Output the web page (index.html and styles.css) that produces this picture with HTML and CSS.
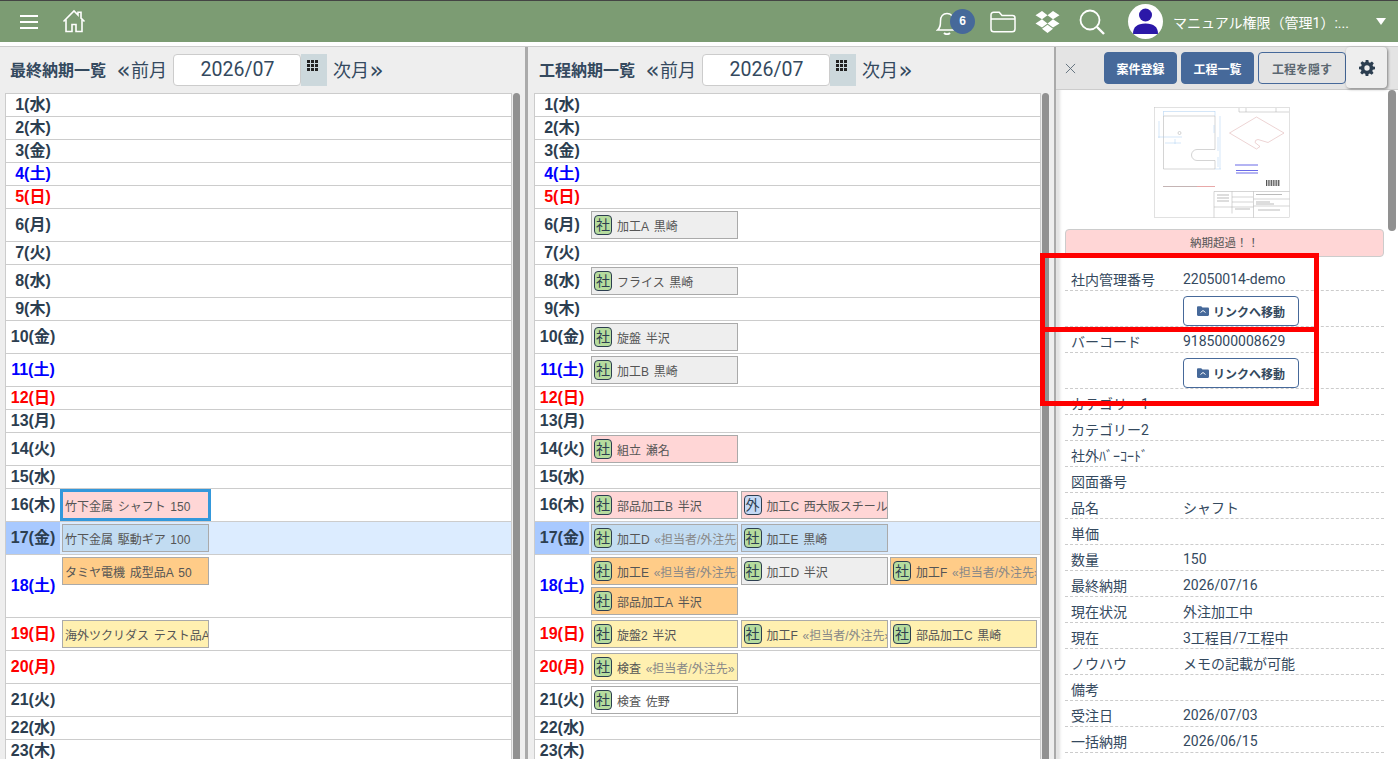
FILE: index.html
```html
<!DOCTYPE html>
<html lang="ja">
<head>
    <meta charset="UTF-8">
    <title>納期一覧</title>
    <link rel="stylesheet" href="styles.css">
</head>
<body>
    <header class="navbar">
        <div class="menu-icon"><span></span><span></span><span></span></div>
        <svg class="home-icon" viewBox="0 0 24 24" width="24" height="24" fill="none" stroke="#fff" stroke-width="1.6">
            <path d="M1.5 12.5 12 2l4 4V3.2h3v6l3.5 3.3"/>
            <path d="M4 10.5V22.5h6v-7h4v7h6V10.5"/>
        </svg>
        <div class="spacer"></div>
        <div class="bell">
            <svg viewBox="0 0 22 26" width="22" height="26" fill="none" stroke="#fff" stroke-width="1.5">
                <path d="M1.5 21c3-2.500 3-5 3-9 0-4.500 2.500-7.500 6.500-7.500s6.500 3 6.500 7.500c0 4 0 6.500 3 9z"/>
                <path d="M8 24c1.500 1.500 4.500 1.500 6 0" stroke-width="2"/>
            </svg>
            <span class="bell-count">6</span>
        </div>
        <svg class="nav-icon folder-icon" viewBox="0 0 26 22" width="26" height="22" fill="none" stroke="#fff" stroke-width="1.5">
            <path d="M1 18V4c0-1.700 1-2.800 2.700-2.800h5.500L12 4.500h10.500c1.500 0 2.500 1 2.500 2.500v11c0 1.700-1 2.800-2.800 2.800H3.800C2 20.800 1 19.700 1 18z"/>
            <path d="M1 8h24"/>
        </svg>
        <svg class="nav-icon drop-icon" viewBox="0 0 24 22" width="25" height="22" fill="#fff">
            <path d="M6.500 0 0 4.200l6.500 4.100L12 4.200zM17.500 0 12 4.200l5.500 4.100L24 4.200zM0 12.400l6.500 4.100 5.500-4.100-5.500-4.100zM17.500 8.300 12 12.400l5.500 4.100 6.500-4.100zM6.500 17.800l5.500 4.200 5.500-4.200-5.500-4.100z"/>
        </svg>
        <svg class="nav-icon search-icon" viewBox="0 0 26 26" width="26" height="26" fill="none" stroke="#fff" stroke-width="1.800">
            <circle cx="11" cy="11" r="9.500"/>
            <path d="M18 18l7 7" stroke-width="2.400"/>
        </svg>
        <div class="avatar">
            <svg viewBox="0 0 35 35" width="35" height="35" fill="#2b18a8">
                <circle cx="17.500" cy="11" r="6.500"/>
                <path d="M5 30c0-7 4-10.500 12.500-10.500S30 23 30 30z"/>
            </svg>
        </div>
        <div class="user-name">マニュアル権限（管理1）:...</div>
        <div class="user-arrow"></div>
    </header>

    <main class="layout">
        <section class="panel">
            <div class="panel-head">
                <span class="panel-title">最終納期一覧</span>
                <a class="month-link"><span class="guillemet">«</span>前月</a>
                <div class="month-input">2026/07</div>
                <div class="month-btn"><div class="grid-icon"><i></i><i></i><i></i><i></i><i></i><i></i><i></i><i></i><i></i></div></div>
                <a class="month-link">次月<span class="guillemet">»</span></a>
            </div>
            <div class="panel-body">
                <div class="cal-list">
                    <div class="row"><div class="day">1(水)</div></div>
                    <div class="row"><div class="day">2(木)</div></div>
                    <div class="row"><div class="day">3(金)</div></div>
                    <div class="row"><div class="day sat">4(土)</div></div>
                    <div class="row"><div class="day sun">5(日)</div></div>
                    <div class="row tall"><div class="day">6(月)</div></div>
                    <div class="row"><div class="day">7(火)</div></div>
                    <div class="row tall"><div class="day">8(水)</div></div>
                    <div class="row"><div class="day">9(木)</div></div>
                    <div class="row tall"><div class="day">10(金)</div></div>
                    <div class="row tall"><div class="day sat">11(土)</div></div>
                    <div class="row"><div class="day sun">12(日)</div></div>
                    <div class="row"><div class="day">13(月)</div></div>
                    <div class="row tall"><div class="day">14(火)</div></div>
                    <div class="row"><div class="day">15(水)</div></div>
                    <div class="row tall"><div class="day">16(木)</div><div class="chips"><div class="chip pink selected">竹下金属&nbsp; シャフト&nbsp; 150</div></div></div>
                    <div class="row tall today"><div class="day">17(金)</div><div class="chips"><div class="chip blue">竹下金属&nbsp; 駆動ギア&nbsp; 100</div></div></div>
                    <div class="row double"><div class="day sat">18(土)</div><div class="chips"><div class="chip orange">タミヤ電機&nbsp; 成型品A&nbsp; 50</div></div></div>
                    <div class="row tall"><div class="day sun">19(日)</div><div class="chips"><div class="chip yellow">海外ツクリダス&nbsp; テスト品A</div></div></div>
                    <div class="row tall"><div class="day sun">20(月)</div></div>
                    <div class="row tall"><div class="day">21(火)</div></div>
                    <div class="row"><div class="day">22(水)</div></div>
                    <div class="row"><div class="day">23(木)</div></div>
                </div>
                <div class="scroll-thumb"></div>
            </div>
        </section>

        <section class="panel">
            <div class="panel-head">
                <span class="panel-title">工程納期一覧</span>
                <a class="month-link"><span class="guillemet">«</span>前月</a>
                <div class="month-input">2026/07</div>
                <div class="month-btn"><div class="grid-icon"><i></i><i></i><i></i><i></i><i></i><i></i><i></i><i></i><i></i></div></div>
                <a class="month-link">次月<span class="guillemet">»</span></a>
            </div>
            <div class="panel-body">
                <div class="cal-list">
                    <div class="row"><div class="day">1(水)</div></div>
                    <div class="row"><div class="day">2(木)</div></div>
                    <div class="row"><div class="day">3(金)</div></div>
                    <div class="row"><div class="day sat">4(土)</div></div>
                    <div class="row"><div class="day sun">5(日)</div></div>
                    <div class="row tall"><div class="day">6(月)</div><div class="chips"><div class="chip grey"><b class="tag">社</b>加工A&nbsp; 黒崎</div></div></div>
                    <div class="row"><div class="day">7(火)</div></div>
                    <div class="row tall"><div class="day">8(水)</div><div class="chips"><div class="chip grey"><b class="tag">社</b>フライス&nbsp; 黒崎</div></div></div>
                    <div class="row"><div class="day">9(木)</div></div>
                    <div class="row tall"><div class="day">10(金)</div><div class="chips"><div class="chip grey"><b class="tag">社</b>旋盤&nbsp; 半沢</div></div></div>
                    <div class="row tall"><div class="day sat">11(土)</div><div class="chips"><div class="chip grey"><b class="tag">社</b>加工B&nbsp; 黒崎</div></div></div>
                    <div class="row"><div class="day sun">12(日)</div></div>
                    <div class="row"><div class="day">13(月)</div></div>
                    <div class="row tall"><div class="day">14(火)</div><div class="chips"><div class="chip pink"><b class="tag">社</b>組立&nbsp; 瀬名</div></div></div>
                    <div class="row"><div class="day">15(水)</div></div>
                    <div class="row tall"><div class="day">16(木)</div><div class="chips">
                        <div class="chip pink"><b class="tag">社</b>部品加工B&nbsp; 半沢</div>
                        <div class="chip pink"><b class="tag outer">外</b>加工C&nbsp; 西大阪スチール</div>
                    </div></div>
                    <div class="row tall today"><div class="day">17(金)</div><div class="chips">
                        <div class="chip blue"><b class="tag">社</b>加工D&nbsp; <span class="muted">«担当者/外注先»</span></div>
                        <div class="chip blue"><b class="tag">社</b>加工E&nbsp; 黒崎</div>
                    </div></div>
                    <div class="row double"><div class="day sat">18(土)</div><div class="chips">
                        <div class="chip orange"><b class="tag">社</b>加工E&nbsp; <span class="muted">«担当者/外注先»</span></div>
                        <div class="chip grey"><b class="tag">社</b>加工D&nbsp; 半沢</div>
                        <div class="chip orange"><b class="tag">社</b>加工F&nbsp; <span class="muted">«担当者/外注先»</span></div>
                        <div class="chip orange"><b class="tag">社</b>部品加工A&nbsp; 半沢</div>
                    </div></div>
                    <div class="row tall"><div class="day sun">19(日)</div><div class="chips">
                        <div class="chip yellow"><b class="tag">社</b>旋盤2&nbsp; 半沢</div>
                        <div class="chip yellow"><b class="tag">社</b>加工F&nbsp; <span class="muted">«担当者/外注先»</span></div>
                        <div class="chip yellow"><b class="tag">社</b>部品加工C&nbsp; 黒崎</div>
                    </div></div>
                    <div class="row tall"><div class="day sun">20(月)</div><div class="chips"><div class="chip yellow"><b class="tag">社</b>検査&nbsp; <span class="muted">«担当者/外注先»</span></div></div></div>
                    <div class="row tall"><div class="day">21(火)</div><div class="chips"><div class="chip white"><b class="tag">社</b>検査&nbsp; 佐野</div></div></div>
                    <div class="row"><div class="day">22(水)</div></div>
                    <div class="row"><div class="day">23(木)</div></div>
                </div>
                <div class="scroll-thumb"></div>
            </div>
        </section>

        <aside class="detail">
            <div class="detail-head">
                <svg class="close-icon" viewBox="0 0 12 12" width="11" height="11" stroke="#5b6b78" fill="none"><path d="M1 1l10 10M11 1L1 11"/></svg>
                <button class="btn">案件登録</button>
                <button class="btn">工程一覧</button>
                <button class="btn btn-line">工程を隠す</button>
                <div class="gear-card">
                    <svg viewBox="0 0 24 24" width="16" height="16" fill="#2c3e50">
                        <path fill-rule="evenodd" d="M10 0h4l.7 3.300 1.900.8L19.400 2.200l2.800 2.800-1.900 2.800.8 1.900L24 10v4l-3.300.7-.8 1.900 1.900 2.800-2.800 2.800-2.800-1.900-1.900.8L14 24h-4l-.7-3.300-1.900-.8-2.800 1.900-2.800-2.800 1.900-2.800-.8-1.900L0 14v-4l3.300-.7.8-1.900L2.200 4.600 5 1.800l2.800 1.900 1.900-.8zM12 8a4 4 0 1 0 0 8 4 4 0 0 0 0-8z"/>
                    </svg>
                </div>
            </div>
            <div class="detail-scroll">
                <div class="detail-body">
                    <svg class="drawing" viewBox="0 0 136 111" width="136" height="111" fill="none" stroke-width=".5">
                        <rect x=".5" y=".5" width="135" height="110" stroke="#c4c4c4"/>
                        <path d="M9.500 9h51.500v33.500H43a5.500 5.500 0 0 0 0 11h18V62H9.500z" stroke="#a8a8a8"/>
                        <path d="M9.500 4.500H61M9.500 9V4M61 9V4M66 9v53M61 62h6M5 14v17M4 30h24M21 32v5M11 36h16M60 18v8M64 30v14M64 50v10" stroke="#a9cdf0"/>
                        <circle cx="25.500" cy="26" r="1.500" stroke="#aaa"/>
                        <path d="M75.500 26 102.500 10 130 26l-16 9.500-10-3a3 3 0 0 0-3 3l5 4-3.500 2.500z" stroke="#dba9a9"/>
                        <path d="M81 58h23M82 63.500h22M82 66h22" stroke="#6a6ae8" stroke-width="1.200"/>
                        <path d="M112 76h14" stroke="#555" stroke-width="6" stroke-dasharray="1 .7"/>
                        <path d="M9 79.500h34" stroke="#c4b4b4" stroke-width="1"/>
                        <path d="M43 79.500h18" stroke="#e8a8a8" stroke-width="1"/>
                        <path d="M60 84.500h75.500M60 84.500v26M78 84.500v22M99.500 84.500v26M99.500 92h36M99.500 99h36M60 100h39.500M78 90h21M78 95h21M85 1v4h50M92 1v4M122 1v4" stroke="#aaa"/>
                        <path d="M102 87.500h26M102 95h14M102 97h18M104 103h22M63 88h12M63 91h12M63 94h12M81 102h15" stroke="#777"/>
                    </svg>
                    <div class="alert">納期超過！！</div>
                    <div class="info-row"><span class="info-label">社内管理番号</span><span>22050014-demo</span></div>
                    <div class="info-row link-row"><span class="info-label"></span><a class="link-btn"><svg viewBox="0 0 12 10" width="12" height="10" fill="#46699a"><path d="M0 1.500C0 .7.500.2 1.200.2h3L5.500 1.500h5.300c.7 0 1.200.5 1.200 1.200v6c0 .7-.5 1.200-1.200 1.200H1.200C.5 9.900 0 9.400 0 8.700z"/><path d="M3.500 6.500 6 4.500l2.500 2" stroke="#fff" fill="none"/></svg>リンクへ移動</a></div>
                    <div class="info-row"><span class="info-label">バーコード</span><span>9185000008629</span></div>
                    <div class="info-row link-row"><span class="info-label"></span><a class="link-btn"><svg viewBox="0 0 12 10" width="12" height="10" fill="#46699a"><path d="M0 1.500C0 .7.500.2 1.200.2h3L5.500 1.500h5.300c.7 0 1.200.5 1.200 1.200v6c0 .7-.5 1.200-1.200 1.200H1.200C.5 9.900 0 9.400 0 8.700z"/><path d="M3.500 6.500 6 4.500l2.500 2" stroke="#fff" fill="none"/></svg>リンクへ移動</a></div>
                    <div class="info-row"><span class="info-label">カテゴリー1</span></div>
                    <div class="info-row"><span class="info-label">カテゴリー2</span></div>
                    <div class="info-row"><span class="info-label">社外ﾊﾞｰｺｰﾄﾞ</span></div>
                    <div class="info-row"><span class="info-label">図面番号</span></div>
                    <div class="info-row"><span class="info-label">品名</span><span>シャフト</span></div>
                    <div class="info-row"><span class="info-label">単価</span></div>
                    <div class="info-row"><span class="info-label">数量</span><span>150</span></div>
                    <div class="info-row"><span class="info-label">最終納期</span><span>2026/07/16</span></div>
                    <div class="info-row"><span class="info-label">現在状況</span><span>外注加工中</span></div>
                    <div class="info-row"><span class="info-label">現在</span><span>3工程目/7工程中</span></div>
                    <div class="info-row"><span class="info-label">ノウハウ</span><span>メモの記載が可能</span></div>
                    <div class="info-row"><span class="info-label">備考</span></div>
                    <div class="info-row"><span class="info-label">受注日</span><span>2026/07/03</span></div>
                    <div class="info-row"><span class="info-label">一括納期</span><span>2026/06/15</span></div>
                </div>
                <div class="detail-thumb"></div>
            </div>
        </aside>
    </main>

    <!-- 説明用の赤枠 -->
    <div class="mark mark-a"></div>
    <div class="mark mark-b"></div>
</body>
</html>
```

FILE: styles.css
```css
* {
    box-sizing: border-box;
}
html, body {
    height: 100%;
}
body {
    margin: 0;
    overflow: hidden;
    font-family: Roboto, "Noto Sans CJK JP", sans-serif;
    font-size: 14px;
    color: #34495e;
    background: #fff;
}

/* ナビバー */
.navbar {
    display: flex;
    align-items: center;
    height: 42px;
    border-top: 1px solid #444;
    background-color: #7c9c73;
    color: #fff;
}
.menu-icon {
    display: flex;
    flex-direction: column;
    gap: 4px;
    width: 18px;
    margin-left: 20px;
}
.menu-icon span {
    display: block;
    height: 2px;
    background: #fff;
}
.home-icon {
    margin-left: 24px;
    margin-top: -1px;
}
.spacer {
    flex: 1;
}
.bell {
    position: relative;
    width: 22px;
    height: 26px;
    margin-right: 32px;
}
.bell-count {
    position: absolute;
    left: 14px;
    top: 0;
    width: 25px;
    height: 25px;
    border-radius: 50%;
    background: #46699a;
    font: bold 12px/25px "Liberation Sans", sans-serif;
    text-align: center;
}
.nav-icon {
    margin-right: 19px;
}
.search-icon {
    margin-right: 23px;
}
.avatar {
    width: 35px;
    height: 35px;
    border-radius: 50%;
    background: #fff;
    overflow: hidden;
    margin-right: 10px;
}
.user-name {
    width: 181px;
    font-size: 14px;
    white-space: nowrap;
}
.user-arrow {
    width: 0;
    height: 0;
    margin: 0 12px 0 22px;
    border-left: 5.5px solid transparent;
    border-right: 5.5px solid transparent;
    border-top: 7px solid #fff;
}

/* 3カラム */
.layout {
    display: flex;
    height: 717px;
    margin-top: 4px;
    border-top: 1px solid #ccc;
}
.panel {
    width: 528px;
    flex: none;
    padding: 0 5px 0 5px;
    background: #eee;
    border-right: 3px solid #aaa;
}
.panel + .panel {
    padding-left: 6px;
    border-right-width: 2px;
}
.panel-head {
    display: flex;
    align-items: center;
    height: 46px;
    padding: 0 0 0 5px;
}
.panel-title {
    width: 106px;
    margin-top: -2px;
    font-size: 16px;
    font-weight: bold;
    white-space: nowrap;
}
.month-link {
    margin-top: -2px;
    font-size: 18px;
    white-space: nowrap;
}
.guillemet {
    display: inline-block;
    width: 15px;
    font-family: "DejaVu Sans", sans-serif;
    font-size: 23px;
    line-height: 0;
    text-align: center;
    vertical-align: -1px;
}
.month-input {
    width: 128px;
    height: 32px;
    margin-left: 6px;
    padding-left: 1px;
    background: #fff;
    border: 1px solid #ccc;
    border-radius: 4px;
    font-size: 19.500px;
    line-height: 30px;
    text-align: center;
}
.month-btn {
    width: 26px;
    height: 32px;
    margin-right: 6px;
    padding: 6px 0 0 6px;
    background: #ccd8dc;
}
.grid-icon {
    display: grid;
    grid-template-columns: repeat(3, 3px);
    gap: 1px;
}
.grid-icon i {
    display: block;
    height: 3px;
    background: #222;
}
.panel-body {
    display: flex;
    height: 670px;
    gap: 1px;
}
.cal-list {
    width: 507px;
    flex: none;
    height: 100%;
    overflow: hidden;
    background: #fff;
    border: 1px solid #ccc;
    border-bottom: none;
}
.scroll-thumb {
    width: 8px;
    height: 100%;
    background: #919191;
    border-radius: 4px 4px 0 0;
}

/* カレンダー行 */
.row {
    display: flex;
    height: 23px;
    border-bottom: 1px solid #ccc;
}
.row.tall {
    height: 33px;
}
.row.double {
    height: 63px;
}
.day {
    display: flex;
    align-items: center;
    justify-content: center;
    width: 54px;
    flex: none;
    font: bold 16px/1 "Liberation Sans", "Noto Sans CJK JP", sans-serif;
    color: #2c3e50;
}
.day.sat {
    color: #00f;
}
.day.sun {
    color: #f00;
}
.today {
    background: #dcecff;
}
.today .day {
    background: #a8c9ff;
}
.chips {
    display: flex;
    flex-wrap: wrap;
    align-content: flex-start;
    gap: 2px 2.500px;
    flex: 1;
    padding: 2px 0 0 2px;
}
.chip {
    width: 147px;
    height: 28px;
    overflow: hidden;
    display: flex;
    align-items: center;
    padding-left: 2px;
    border: 1px solid #aaa;
    font: 12px "Liberation Sans", "Noto Sans CJK JP", sans-serif;
    word-spacing: -1px;
    color: #555;
    white-space: pre;
}
.chip.grey {
    background: #eee;
}
.chip.pink {
    background: #ffd6d6;
}
.chip.blue {
    background: #c2dcf2;
}
.chip.orange {
    background: #ffcc88;
}
.chip.yellow {
    background: #fff0b0;
}
.chip.white {
    background: #fff;
}
.chip.selected {
    outline: 3px solid #3498db;
    outline-offset: -1px;
}
.tag {
    flex: none;
    width: 18px;
    height: 20px;
    margin-right: 5px;
    border: 1px solid #2c3e50;
    border-radius: 4px;
    background: #b6dc9e;
    color: #2c3e50;
    font-size: 14px;
    font-weight: normal;
    line-height: 18px;
    text-align: center;
}
.tag.outer {
    background: #c5d9f5;
}
.muted {
    color: #888;
}

/* 詳細パネル */
.detail {
    flex: 1;
    min-width: 0;
    background: #e4e4e4;
}
.detail-head {
    position: relative;
    display: flex;
    align-items: center;
    height: 43px;
    padding: 0 0 0 9px;
    border-bottom: 1px solid #ccc;
}
.close-icon {
    margin-right: 28px;
}
.btn {
    width: 73px;
    height: 32px;
    margin-right: 4px;
    padding: 0;
    border: 1px solid #46699a;
    border-radius: 4px;
    background: #46699a;
    color: #fff;
    font: bold 12px "Noto Sans CJK JP", sans-serif;
}
.btn-line {
    width: 88px;
    margin: 0;
    background: #e4e4e4;
    color: #5b6770;
}
.gear-card {
    position: absolute;
    left: 290px;
    top: 0;
    width: 41px;
    height: 41px;
    display: flex;
    align-items: center;
    justify-content: center;
    border-radius: 4px;
    background: #eee;
    box-shadow: 1px 1px 3px rgba(0,0,0,0.45);
}
.detail-scroll {
    display: flex;
    height: 673px;
    margin-left: 2px;
    background: #fff;
    box-shadow: inset 4px 0 3px -2px rgba(0,0,0,0.12);
}
.detail-body {
    width: 330px;
    flex: none;
    padding: 17px 4px 0 7px;
    overflow: hidden;
}
.detail-thumb {
    width: 8px;
    height: 141px;
    background: #919191;
    border-radius: 4px;
}
.drawing {
    display: block;
    margin: 0 auto 11px 89px;
}
.alert {
    height: 28px;
    margin-bottom: 8px;
    border: 1px solid #ccc;
    border-radius: 4px;
    background: #ffd6d6;
    color: #555;
    font-size: 11.500px;
    line-height: 27px;
    text-align: center;
}
.info-row {
    display: flex;
    align-items: center;
    height: 26px;
    padding: 3px 0 0 6px;
    border-bottom: 1px dashed #ccc;
    white-space: nowrap;
}
.info-label {
    width: 112px;
    flex: none;
}
.link-row {
    align-items: flex-start;
    height: 36px;
    padding-top: 5px;
}
.link-btn {
    display: flex;
    align-items: center;
    justify-content: center;
    gap: 4px;
    width: 116px;
    height: 30px;
    border: 1px solid #46699a;
    border-radius: 4px;
    font-size: 12px;
    font-weight: bold;
}

/* 赤枠 */
.mark {
    position: absolute;
    left: 1040px;
    width: 279px;
    border: 5px solid #f00;
}
.mark-a {
    top: 253px;
    height: 79px;
}
.mark-b {
    top: 327px;
    height: 79px;
}
```
